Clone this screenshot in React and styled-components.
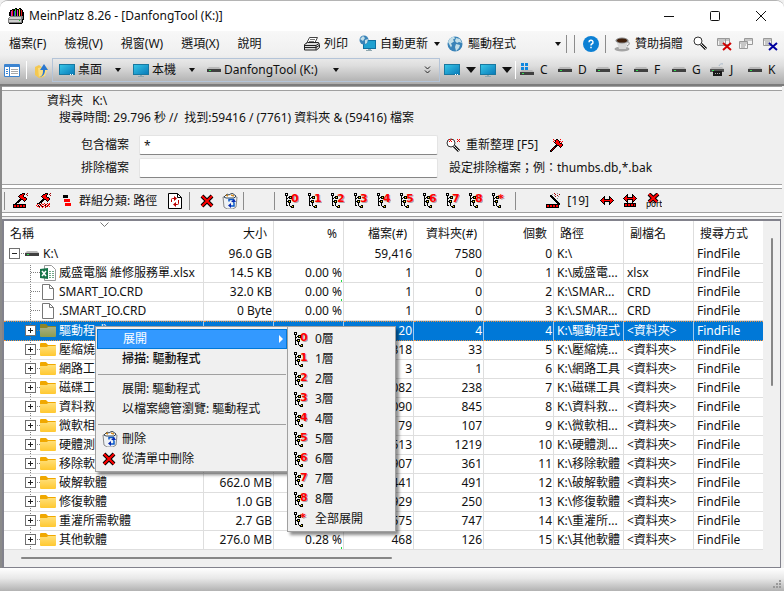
import React, { useState } from 'react';
import styled, { createGlobalStyle, css } from 'styled-components';

const GlobalStyle = createGlobalStyle`
  * {
    box-sizing: border-box;
  }
  body {
    margin: 0;
    background: #f0f0f0;
    color: #111;
    font: 12px/16px 'Noto Sans', 'Noto Sans CJK TC', sans-serif;
  }
  button, input {
    margin: 0;
    padding: 0;
    border: none;
    background: none;
    color: inherit;
    font: inherit;
  }
  svg {
    display: block;
    flex: none;
  }
`;

const Window = styled.div`
  display: flex;
  flex-direction: column;
  min-height: 100vh;
  border-top: 1px solid #b4b4b4;
  border-radius: 8px 8px 0 0;
  background: #fff;
  overflow: hidden;
  white-space: nowrap;
`;

const TitleBar = styled.header`
  display: flex;
  align-items: center;
  gap: 5px;
  height: 30px;
  padding-left: 8px;
  background: #fff;

  h1 {
    flex: 1;
    margin: 0;
    font-size: 12px;
    font-weight: 400;
  }
`;

const WindowButtons = styled.div`
  display: flex;

  button {
    display: flex;
    align-items: center;
    justify-content: center;
    width: 46px;
    height: 28px;
  }
`;

const Bars = styled.div`
  background: linear-gradient(#f8f8f8, #efefef 45%, #dedede 65%, #acacac);
  border-bottom: 2px solid #7c7c7c;
`;

const Bar = styled.div`
  display: flex;
  align-items: center;
  height: ${props => props.height}px;
  padding: ${props => props.padding || '0'};
`;

const MenuBar = styled.nav`
  display: flex;
  width: 304px;

  button {
    padding: 0 9px;
  }
`;

const ToolButton = styled.button`
  display: flex;
  align-items: center;
  gap: ${props => props.gap || 4}px;
  flex: ${props => (props.grow ? '1' : 'none')};
  margin-right: ${props => props.after || 0}px;
  text-align: left;

  span {
    flex: ${props => (props.grow ? '1' : 'none')};
  }
`;

const Divider = styled.i`
  width: 1px;
  height: ${props => props.height || 18}px;
  margin-right: ${props => props.after || 0}px;
  background: ${props => props.color || '#8c8c8c'};
`;

const Address = styled.div`
  display: flex;
  align-items: center;
  flex: 1;
  height: 24px;
  margin-right: 4px;
  padding: 0 8px 0 6px;
  border: 1px solid #b4c4d8;
`;

const Spacer = styled.span`
  flex: 1;
`;

const Arrow = styled.i`
  width: 0;
  height: 0;
  margin-left: ${props => props.before || 0}px;
  border: ${props => props.size || 3}px solid transparent;
  border-top: ${props => (props.size || 3) + 1}px solid #111;
  border-bottom: 0;
`;

const Drives = styled.div`
  display: flex;

  button {
    width: 38px;
    gap: 6px;
  }
  button:last-child {
    width: 36px;
  }
`;

const Client = styled.main`
  flex: 1;
  display: flex;
  flex-direction: column;
  padding: 0 2px 0 0;
  border-left: 2px solid #8a8a8a;
  background: #f0f0f0;
`;

const Splitter = styled.div`
  flex: none;
  height: 5px;
  border: 1px solid #a0a0a0;
  border-width: 1px 0;
  background: #fff;
`;

const Info = styled.section`
  height: 93px;
  padding-top: 2px;

  p {
    margin: 0 0 1px;
    padding-left: 45px;
  }
  p + p {
    padding-left: 57px;
  }
  p span {
    margin-left: 6px;
  }
`;

const Filters = styled.form`
  display: grid;
  grid-template-columns: 129px minmax(0, 1fr) 336px;
  column-gap: 8px;
  row-gap: 3px;
  align-items: center;
  margin-top: 9px;

  label {
    padding-right: 2px;
    text-align: right;
  }
  input {
    height: 20px;
    padding: 0 4px;
    border: 1px solid #e4e4e4;
    border-bottom-color: #868686;
    border-radius: 2px;
    background: #fff;
  }
`;

const FilterActions = styled.div`
  display: flex;
  align-items: center;
  padding-left: ${props => props.indent || 0}px;
`;

const Pane = styled.section`
  position: relative;
  flex: 1;
  display: grid;
  grid-template-columns: minmax(0, 1fr) 17px;
  grid-template-rows: auto 1fr;
  margin-top: 2px;
  margin-right: 1px;
  border: 1px solid #82828c;
  border-width: 2px 1px 1px 2px;
  background: #f0f0f0;
`;

const Grid = styled.table`
  width: 100%;
  table-layout: fixed;
  border-collapse: separate;
  border-spacing: 0;
  background: #fff;

  th {
    position: relative;
    height: 24px;
    padding: 1px 6px 0;
    border-right: 1px solid #dedede;
    font-weight: 400;
    text-align: left;
  }
  th:last-child, td:last-child {
    border-right: 0;
  }
`;

const Row = styled.tr`
  td {
    position: relative;
    height: 19px;
    padding: 0 3px 1px;
    border: 1px solid #dedede;
    border-width: 0 1px 1px 0;
    line-height: 17px;
    overflow: hidden;
  }
  ${props => props.selected && css`
    td {
      border-top: 1px dotted #e89040;
      border-bottom: 1px dotted #e89040;
      border-right-color: #9fcaf0;
      background: #0078d7;
      color: #fff;
      line-height: 15px;
    }
  `}
`;

const Th = styled.th`
  && {
    text-align: ${props => (props.right ? 'right' : 'left')};
  }
`;

const Td = styled.td`
  && {
    padding-right: 1px;
    text-align: ${props => (props.right ? 'right' : 'left')};
  }
`;

const NameCell = styled.div`
  display: flex;
  align-items: center;
  height: 17px;
  margin-left: ${props => (props.root ? 2 : 18)}px;
`;

const SortMark = styled.span`
  position: absolute;
  left: 96px;
  top: 1px;
`;

const PercentBar = styled.i`
  position: absolute;
  right: 1px;
  bottom: 0;
  width: 1px;
  height: 2px;
  background: #22dd44;
`;

const VerticalScroll = styled.div`
  padding: 17px 7px 0 8px;

  i {
    display: block;
    height: 148px;
    border-radius: 1px;
    background: #868686;
  }
`;

const HorizontalScroll = styled.div`
  grid-column: 1 / 3;
  height: 17px;
  padding: 7px 17px;

  i {
    display: block;
    width: 50%;
    height: 2px;
    border-radius: 1px;
    background: #868686;
  }
`;

const Menu = styled.div`
  position: absolute;
  left: ${props => props.left}px;
  top: 105px;
  width: ${props => props.width}px;
  padding: 2px 1px;
  border: 1px solid #a0a0a0;
  background: #f0f0f0;
  box-shadow: 3px 3px 3px rgba(0, 0, 0, 0.45);

  hr {
    height: 1px;
    margin: 5px 1px 4px;
    border: 0;
    background: #a0a0a0;
  }
`;

const MenuItem = styled.button`
  display: grid;
  grid-template-columns: ${props => props.iconWidth || 25}px 1fr auto;
  align-items: center;
  width: 100%;
  height: 20px;
  text-align: left;
  font-weight: ${props => (props.bold ? 500 : 400)};
  ${props => props.active && css`
    border: 1px solid #0078d7;
    background: #3399ff;
    color: #fff;
  `}

  svg {
    grid-column: 1;
    margin-left: 5px;
  }
  span {
    grid-column: 2;
  }
`;

const SubArrow = styled.i`
  margin-right: 3px;
  border: 4px solid transparent;
  border-left-color: #fff;
  border-right: 0;
`;

const StatusBar = styled.footer`
  display: flex;
  align-items: flex-end;
  justify-content: flex-end;
  height: 23px;
  padding: 0 3px 3px;
  background: linear-gradient(#fff, #e8e8e8 45%, #b2b2b2);
`;

/* icons */

const palette = { k: '#000', r: '#f00', d: '#a00000', g: '#909090', w: '#fff', y: '#f0e020', l: '#d0d0d0', b: '#0000b0' };
const appPalette = { k: '#000', r: '#e02020', m: '#e020c0', b: '#3030e0', y: '#e8d820', n: '#30c030', l: '#cfcfcf', g: '#808080' };

const Pixels = ({ rows, colors = palette, children }) => {
  const width = Math.max(...rows.map(row => row.length));
  return (
    <svg width={width} height={rows.length} shapeRendering="crispEdges" aria-hidden="true">
      {rows.map((row, y) => row.split('').map((c, x) => (
        colors[c] ? <rect key={`${x}-${y}`} x={x} y={y} width="1" height="1" fill={colors[c]} /> : null
      )))}
      {children}
    </svg>
  );
};

const appRows = [
  '.......kk..kk...',
  '....kkknkkkykk..',
  '..kkrkknkmkykrk.',
  '..kmrkbnkmkykrk.',
  '.kkmrkbnkmkykrkk',
  '.kkmrkbnkmkykrkk',
  '.kkmrkbnkmkykrkk',
  '.kkmrkbnkmkykrkk',
  '..gggggggggggggk',
  '.glllllllllllggk',
  'gllllllllllllggk',
  'ggggggggggggggkk',
  'gllllllllllnlgk.',
  'gllllllllllllgk.',
  'ggggggggggggggk.',
  '.kkkkkkkkkkkkk..',
];

const treeRows = [
  'kkk...........',
  'kwk...........',
  'kkk...........',
  '.k..kkk.......',
  '.k.kkyk.......',
  '.kk.kkk.......',
  '.k............',
  '.k.kkk........',
  '.kkkyk........',
  '.k.kkk........',
  '.k..k.........',
  '.k..k.........',
  '.kk.k..kk.....',
  '.....kkyk.....',
  '......kkk.....',
];

const hammerRows = [
  '.........kkk..d.',
  '.......kkrrk.d..',
  '......krrrk...d.',
  '.....krrrrk.....',
  '......krrrrkk...',
  '.......krrrrrk..',
  '......kkkkrrrk..',
  '.....kkk..krk...',
  '....kkk....k....',
  '...kkk..........',
];

const hammerBaseRows = [...hammerRows, '..kk............', 'kkkkkkkkkkkkk...', 'krrkrrkrrkrrk...', 'krrkrrkrrkrrk...', 'kkkkkkkkkkkkk...'];
const hammerDotRows = [...hammerRows, '.kkk.d..r..d.r..', '.r.rk.rr.dr.rr..', 'r.k.rd..rk.dr...', '.rrk.rkr.rrd.r..', '...r..r..d......'];

const hitRows = [
  '...r..kk..r...',
  '....rkrrk.....',
  '...r.krrrkr.r.',
  '....krrrrk.r..',
  '.....krrrrkk..',
  '......krrrrrk.',
  '.....kkkkrrrk.',
  '....kkk..krk..',
  '...kdk....k...',
  '..kdk.........',
  '.kdk..........',
  'kdk...........',
  'kk............',
];

const wandRows = [
  '........d..g....',
  '......g..d...d..',
  '....kk..g..d....',
  '....kkk..d..g...',
  '.....kkk........',
  '......kkk..g....',
  '.......kkk......',
  '........kkk.....',
  '.........kkk....',
  '..........kkk...',
  '...........kkk..',
  'kkkkkkkkkkkkkk..',
  'krrkrrkrrkrrk...',
  'krrkrrkrrkrrk...',
  'kkkkkkkkkkkkk...',
];

const swapRows = [
  '....k....k....',
  '...kk....kk...',
  '..krk....krk..',
  '.krrkkkkkkrrk.',
  'krrrrrrrrrrrrk',
  '.krrkkkkkkrrk.',
  '..krk....krk..',
  '...kk....kk...',
  '....k....k....',
];

const swapBaseRows = [...swapRows, '.kkkkkkkkkkkk.', '.krrkrrkrrkrk.', '.krrkrrkrrkrk.', '.kkkkkkkkkkkk.'];

const Depth = ({ level }) => (
  <Pixels rows={treeRows}>
    <text x="7" y="10" fontSize="11" fontFamily="DejaVu Sans" fontWeight="700" fill="#b0a0a0">{level}</text>
    <text x="6" y="9" fontSize="11" fontFamily="DejaVu Sans" fontWeight="700" fill="#f00">{level}</text>
  </Pixels>
);

const Screen = ({ stand }) => (
  <svg width="16" height="14" aria-hidden="true">
    <linearGradient id="screen" x2="1" y2="1">
      <stop stopColor="#38c8e8" />
      <stop offset="1" stopColor="#0878b8" />
    </linearGradient>
    <rect x="0.5" y="1.5" width="15" height="10" fill="url(#screen)" stroke="#1878a0" />
    {stand
      ? <path d="M7 12h2v1h2v1H5v-1h2z" fill="#90a8b0" />
      : <path d="M11 11.5h1m1 0h1" stroke="#fff" />}
  </svg>
);

const Drive = ({ windows }) => (
  <svg width="14" height={windows ? 16 : 6} aria-hidden="true">
    {windows && <path d="M1 1h3v3H1zM5 1h3v3H5zM1 5h3v3H1zM5 5h3v3H5z" fill="#1088e0" />}
    <g transform={windows ? 'translate(0 8)' : undefined}>
      <path d="M2 0h10l2 2H0z" fill="#b8b8b8" />
      <path d="M0 2h14v3H0z" fill="#404040" />
      <path d="M2 3h2v1H2z" fill="#30e050" />
    </g>
  </svg>
);

const UsbDrive = () => (
  <svg width="14" height="14" aria-hidden="true">
    <path d="M9 3a3 3 0 0 1 4-2" stroke="#a8b8c8" fill="none" />
    <path d="M2 4h10l2 2H0z" fill="#b8b8b8" />
    <path d="M0 6h14v3H0z" fill="#505050" />
    <path d="M3 8h9v5H3z" fill="#181818" />
    <path d="M5 10.500h5" stroke="#aaa" strokeDasharray="1 1" />
    <path d="M2 7h2v1H2z" fill="#30e050" />
  </svg>
);

const Globe = ({ size = 16 }) => (
  <svg width={size} height={size} viewBox="0 0 16 16" aria-hidden="true">
    <circle cx="8" cy="8" r="7.5" fill="#3a83b8" />
    <path d="M1 6c1-3 3-5 6-5.500l1 2-2 1 1 2-3 2 1 2-1 2zM9 2l4 1 2 4-3-1-2 1-2-2zM9 8l4 1-1 3-3 3-1-4z" fill="#c4dfe8" />
  </svg>
);

const UpdateIcon = () => (
  <svg width="17" height="17" aria-hidden="true">
    <rect x="4.500" y="5.500" width="12" height="8" fill="#20a0d0" stroke="#1070a0" />
    <path d="M9 14h3v1h1v1H7v-1h2z" fill="#90a8b0" />
    <circle cx="5" cy="5" r="4.500" fill="#3a83b8" />
    <path d="M1 4l3-3 2 2-2 3zM6 5l3-1-1 4-2 1z" fill="#c4dfe8" />
  </svg>
);

const PrinterIcon = () => (
  <svg width="16" height="15" aria-hidden="true">
    <path d="M5.500 1.500h8l-3 6h-8z" fill="#fff" stroke="#444" />
    <path d="M6 3.500h5M5 5.500h5" stroke="#777" />
    <path d="M.5 8.500l3-2h11l1 2v3l-3 2.500H.5z" fill="#ddd" stroke="#222" />
    <path d="M1 9.500h11l3-2M1 11.500h11l3-2M12 10v4" stroke="#222" fill="none" />
  </svg>
);

const HelpIcon = () => (
  <svg width="16" height="16" aria-hidden="true">
    <circle cx="8" cy="8" r="8" fill="#0c80d4" />
    <path d="M6 6.200a2 2 0 1 1 2.800 1.800c-.6.300-.8.600-.8 1.500M8 10.800v1.500" fill="none" stroke="#fff" strokeWidth="1.500" />
  </svg>
);

const CoffeeIcon = () => (
  <svg width="17" height="16" aria-hidden="true">
    <ellipse cx="8" cy="13" rx="7.500" ry="2.500" fill="#a4a4a4" />
    <path d="M2 4h12l-2 9H5z" fill="#d8d8d8" />
    <path d="M13 6c3-1 3 3 0 4" fill="none" stroke="#888" />
    <ellipse cx="8" cy="4.500" rx="6.500" ry="3" fill="#888" />
    <ellipse cx="8" cy="4.500" rx="5" ry="2" fill="#40200c" />
  </svg>
);

const Magnifier = ({ sparks }) => (
  <svg width="16" height="15" aria-hidden="true">
    <path d="M8 8l5 5" stroke="#111" strokeWidth="3" />
    <path d="M8 8l5 5" stroke="#ddd" />
    <circle cx="5" cy="5" r="4" fill="#fff" stroke="#333" />
    {sparks && <path d="M3 1l3 3M6 1L3 4M11 1l3 3m0-3l-3 3" stroke="#e00" />}
  </svg>
);

const CloseIcon = () => (
  <svg width="14" height="14" aria-hidden="true">
    <path d="M2 2l10 10M12 2L2 12" stroke="#000" strokeWidth="4" />
    <path d="M2 2l10 10M12 2L2 12" stroke="#f00" strokeWidth="2" />
  </svg>
);

const WindowsIcon = ({ cross, single }) => (
  <svg width="16" height="14" aria-hidden="true">
    {!single && <path d="M5.500 1.500h8v6h-8zM6 3h7" fill="#f4f4f4" stroke="#999" />}
    <g transform={cross ? undefined : 'translate(-1 3)'}>
      <path d="M1.500 1.500h8v7h-8zM2 3h7M3 5h5M3 7h4" fill="#f4f4f4" stroke="#999" />
    </g>
    {cross && <path d="M7 6l8 7M15 6l-8 7" stroke={cross} strokeWidth="2" />}
  </svg>
);

const PanelIcon = () => (
  <svg width="16" height="13" aria-hidden="true">
    <path d="M.5.500h15v12H.5z" fill="#fff" stroke="#3c84d0" />
    <path d="M1 2h14" stroke="#3c84d0" strokeWidth="2" />
    <path d="M5.500 3v10M2 5.500h2M2 7.500h2M2 9.500h2" stroke="#3c84d0" />
    <path d="M7 5.500h7M7 7.500h7M7 9.500h7" stroke="#a8a8a8" />
  </svg>
);

const FolderUpIcon = () => (
  <svg width="15" height="15" aria-hidden="true">
    <path d="M1 4l4-2 5 4v8l-5 1-4-3z" fill="#f4c850" />
    <path d="M4 5l6-1 4 1-3 8-6 1z" fill="#fbdd80" />
    <path d="M5 14c4-1 4-4 4-7H6l4-6 4 6h-3c0 4-2 7-6 7z" fill="#2a78d0" />
  </svg>
);

const FolderIcon = ({ dim }) => (
  <svg width="16" height="13" aria-hidden="true">
    <linearGradient id={dim ? 'folder-dim' : 'folder'} x2="0" y2="1">
      <stop stopColor={dim ? '#a8b084' : '#ffdf78'} />
      <stop offset="1" stopColor={dim ? '#8c9c50' : '#ffc830'} />
    </linearGradient>
    <path d="M0 1q0-1 1-1h5l2 2h7q1 0 1 1v3H0z" fill={dim ? '#8c8428' : '#f0a800'} />
    <path d="M0 4h7l1-1h8v9q0 1-1 1H1q-1 0-1-1z" fill={dim ? 'url(#folder-dim)' : 'url(#folder)'} />
  </svg>
);

const FileIcon = () => (
  <svg width="16" height="16" aria-hidden="true">
    <path d="M2.500.500h7l4 4v11h-11z" fill="#fff" stroke="#777" />
    <path d="M9.500.500v4h4" fill="none" stroke="#777" />
  </svg>
);

const ExcelIcon = () => (
  <svg width="16" height="16" aria-hidden="true">
    <path d="M4.500.500h7l4 4v11h-11z" fill="#fff" stroke="#999" />
    <path d="M9 6.500h5M9 8.500h5M9 10.500h5M9 12.500h5" stroke="#70a888" strokeDasharray="2 1" />
    <path d="M0 4l8-1v11l-8-1z" fill="#18744a" />
    <path d="M2 6l4 5M6 6l-4 5" stroke="#fff" strokeWidth="1.500" />
  </svg>
);

const RefreshPage = () => (
  <svg width="14" height="16" aria-hidden="true">
    <path d="M.5.500h9l4 4v11H.5z" fill="#fff" stroke="#000" />
    <path d="M9.500.500v4h4" fill="none" stroke="#000" />
    <path d="M3.500 9V6.500q0-1 1-1H7M10.500 7v3.500q0 1-1 1H7" fill="none" stroke="#b00" />
    <path d="M6 3l3 2.500L6 8zM8 9l-3 2.500L8 14z" fill="#b00" />
  </svg>
);

const RecycleIcon = () => (
  <svg width="16" height="16" aria-hidden="true">
    <path d="M1 4h14l-1 10-3 2H5l-3-2z" fill="#eef2f6" stroke="#888" />
    <path d="M2 4l3-3 2 1 3-2 4 3-2 2H4z" fill="#fff" stroke="#345" />
    <path d="M4 2l2 1M9 2l3 1" stroke="#c82" strokeWidth="1.500" />
    <path d="M7 8.500V6.500h4.500v3M12 9.500v3.500H8" fill="none" stroke="#0858c8" strokeWidth="1.500" />
    <path d="M9 10v5l-3-2.500zM9 9h5l-2-3z" fill="#0828b0" />
  </svg>
);

const GroupIcon = () => (
  <svg width="9" height="12" shapeRendering="crispEdges" aria-hidden="true">
    <path d="M0 0h5v3H0z" fill="#000" />
    <path d="M1 4h6v3H1zM2 8h6v3H2z" fill="#f00" />
  </svg>
);

const PortIcon = () => (
  <svg width="16" height="16" aria-hidden="true">
    <path d="M3 1l8 8M12 1l-9 8" stroke="#000" strokeWidth="4" />
    <path d="M3 1l8 8M12 1l-9 8" stroke="#f00" strokeWidth="2" />
    <text x="0" y="14" fontSize="8" fontFamily="DejaVu Sans" fill="#000">port</text>
  </svg>
);

// dotted branch with an optional expander box, as drawn left of each node
const Branch = ({ expander, root }) => (
  <svg width={root ? 16 : 15} height="19" aria-hidden="true" shapeRendering="crispEdges">
    {!root && <path d="M5.500 0v19" stroke="#808080" strokeDasharray="1 1" />}
    <path d="M6 9.500h10" stroke="#808080" strokeDasharray="1 1" />
    {expander && (
      <g>
        <rect x="0.500" y="4.500" width="10" height="10" fill="#fff" stroke="#707070" />
        <path d={expander === '+' ? 'M3 9.500h5M5.500 7v5' : 'M3 9.500h5'} stroke="#222" />
      </g>
    )}
  </svg>
);

/* data */

const columns = [
  { title: '名稱', width: 200 },
  { title: '大小', width: 70, right: true },
  { title: '%', width: 70, right: true },
  { title: '檔案(#)', width: 70, right: true },
  { title: '資料夾(#)', width: 70, right: true },
  { title: '個數', width: 70, right: true },
  { title: '路徑', width: 70 },
  { title: '副檔名', width: 70 },
  { title: '搜尋方式' },
];

const DIR = '<資料夾>';

const items = [
  ['drive', 'K:\\', '96.0 GB', '', '59,416', '7580', 'K:\\', ''],
  ['excel', '威盛電腦 維修服務單.xlsx', '14.5 KB', '0.00 %', '1', '0', 'K:\\威盛電...', 'xlsx'],
  ['file', 'SMART_IO.CRD', '32.0 KB', '0.00 %', '1', '0', 'K:\\SMAR...', 'CRD'],
  ['file', '.SMART_IO.CRD', '0 Byte', '0.00 %', '1', '0', 'K:\\.SMAR...', 'CRD'],
  ['folder', '驅動程式', '16.4 GB', '16.00 %', '20', '4', 'K:\\驅動程式', DIR],
  ['folder', '壓縮燒', '', '', '318', '33', 'K:\\壓縮燒...', DIR],
  ['folder', '網路工', '', '', '3', '1', 'K:\\網路工具', DIR],
  ['folder', '磁碟工', '', '', '082', '238', 'K:\\磁碟工具', DIR],
  ['folder', '資料救', '', '', '090', '845', 'K:\\資料救...', DIR],
  ['folder', '微軟相', '', '', '79', '107', 'K:\\微軟相...', DIR],
  ['folder', '硬體測', '', '', '513', '1219', 'K:\\硬體測...', DIR],
  ['folder', '移除軟', '', '', '907', '361', 'K:\\移除軟體', DIR],
  ['folder', '破解軟體', '662.0 MB', '', '441', '491', 'K:\\破解軟體', DIR],
  ['folder', '修復軟體', '1.0 GB', '', '929', '250', 'K:\\修復軟體', DIR],
  ['folder', '重灌所需軟體', '2.7 GB', '', '575', '747', 'K:\\重灌所...', DIR],
  ['folder', '其他軟體', '276.0 MB', '0.28 %', '468', '126', 'K:\\其他軟體', DIR],
];

const levels = ['0', '1', '2', '3', '4', '5', '6', '7', '8', '*'];

const NodeIcon = ({ kind, selected }) => {
  if (kind === 'drive') return <Drive />;
  if (kind === 'excel') return <ExcelIcon />;
  if (kind === 'file') return <FileIcon />;
  return <FolderIcon dim={selected} />;
};

const NodeName = styled.span`
  margin-left: ${props => (props.root ? 4 : 3)}px;
`;

const ItemRow = ({ item, index, selected, onSelect }) => {
  const [kind, name, size, percent, files, folders, path, ext] = item;
  const root = kind === 'drive';
  const expander = root ? '-' : kind === 'folder' && '+';
  return (
    <Row selected={selected} onClick={onSelect}>
      <Td>
        <NameCell root={root}>
          <Branch expander={expander} root={root} />
          <NodeIcon kind={kind} selected={selected} />
          <NodeName root={root}>{name}</NodeName>
        </NameCell>
      </Td>
      <Td right>{size}</Td>
      <Td right>
        {percent}
        {percent && index !== 3 && !selected && <PercentBar />}
      </Td>
      <Td right>{files}</Td>
      <Td right>{folders}</Td>
      <Td right>{index}</Td>
      <Td>{path}</Td>
      <Td>{ext}</Td>
      <Td>FindFile</Td>
    </Row>
  );
};

const App = () => {
  const [selected, setSelected] = useState(4);
  const [include, setInclude] = useState('*');
  const [exclude, setExclude] = useState('');

  return (
    <Window>
      <GlobalStyle />
      <TitleBar>
        <Pixels rows={appRows} colors={appPalette} />
        <h1>MeinPlatz 8.26 - [DanfongTool (K:)]</h1>
        <WindowButtons>
          <button aria-label="Minimize"><svg width="10" height="10"><path d="M0 5.500h10" stroke="#111" /></svg></button>
          <button aria-label="Maximize"><svg width="10" height="10"><rect x="0.500" y="0.500" width="9" height="9" rx="1" fill="none" stroke="#111" /></svg></button>
          <button aria-label="Close"><svg width="10" height="10"><path d="M0 0l10 10M10 0L0 10" stroke="#111" /></svg></button>
        </WindowButtons>
      </TitleBar>

      <Bars>
        <Bar height={25}>
          <MenuBar>
            <button>檔案(F)</button>
            <button>檢視(V)</button>
            <button>視窗(W)</button>
            <button>選項(X)</button>
            <button>說明</button>
          </MenuBar>
          <ToolButton after={11}><PrinterIcon /><span>列印</span></ToolButton>
          <ToolButton after={7}><UpdateIcon /><span>自動更新</span><Arrow before={2} /></ToolButton>
          <ToolButton grow gap={5} after={5}><Globe /><span>驅動程式</span><Arrow /></ToolButton>
          <Divider after={7} />
          <Divider after={8} />
          <ToolButton aria-label="Help" after={6}><HelpIcon /></ToolButton>
          <Divider after={8} />
          <ToolButton after={10}><CoffeeIcon /><span>贊助捐贈</span></ToolButton>
          <ToolButton aria-label="Find" after={7}><Magnifier /></ToolButton>
          <ToolButton aria-label="Close all" after={7}><WindowsIcon cross="#d00000" /></ToolButton>
          <ToolButton aria-label="Cascade" after={7}><WindowsIcon /></ToolButton>
          <ToolButton aria-label="Close window" after={6}><WindowsIcon single cross="#0000a0" /></ToolButton>
        </Bar>
        <Bar height={28} padding="0 0 0 4px">
          <ToolButton aria-label="Panel" after={6}><PanelIcon /></ToolButton>
          <Divider color="#fff" after={7} />
          <ToolButton aria-label="Up" after={3}><FolderUpIcon /></ToolButton>
          <Address>
            <ToolButton gap={3} after={12}><Screen /><span>桌面</span><Arrow before={10} /></ToolButton>
            <ToolButton gap={3} after={12}><Screen stand /><span>本機</span><Arrow before={10} /></ToolButton>
            <ToolButton gap={3}><Drive /><span>DanfongTool (K:)</span><Arrow before={12} /></ToolButton>
            <Spacer />
            <ToolButton aria-label="More">
              <svg width="7" height="8"><path d="M1 .500l2.500 2.500L6 .500M1 4.500L3.500 7 6 4.500" fill="none" stroke="#222" /></svg>
            </ToolButton>
          </Address>
          <ToolButton aria-label="Desktop" gap={6} after={4}><Screen /><Arrow size={5} /></ToolButton>
          <ToolButton aria-label="Computer" gap={6} after={3}><Screen stand /><Arrow size={5} /></ToolButton>
          <Divider color="#fff" after={4} />
          <Drives>
            {['C', 'D', 'E', 'F', 'G', 'J', 'K'].map(letter => (
              <ToolButton key={letter}>
                {letter === 'J' ? <UsbDrive /> : <Drive windows={letter === 'C'} />}
                <span>{letter}</span>
              </ToolButton>
            ))}
          </Drives>
        </Bar>
      </Bars>

      <Client>
        <Splitter />
        <Info>
          <p>資料夾 <span>K:\</span></p>
          <p>搜尋時間: 29.796 秒 //&nbsp; 找到:59416 / (7761) 資料夾 &amp; (59416) 檔案</p>
          <Filters onSubmit={e => e.preventDefault()}>
            <label htmlFor="include">包含檔案</label>
            <input id="include" value={include} onChange={e => setInclude(e.target.value)} />
            <FilterActions>
              <ToolButton type="submit" gap={4} after={12}><Magnifier sparks /><span>重新整理 [F5]</span></ToolButton>
              <ToolButton type="button" aria-label="Stop"><Pixels rows={hitRows} /></ToolButton>
            </FilterActions>
            <label htmlFor="exclude">排除檔案</label>
            <input id="exclude" value={exclude} onChange={e => setExclude(e.target.value)} />
            <FilterActions indent={3}>設定排除檔案；例：thumbs.db,*.bak</FilterActions>
          </Filters>
        </Info>
        <Splitter />
        <Bar height={23} padding="0 0 0 2px">
          <Divider after={8} />
          <ToolButton aria-label="Scan" after={7}><Pixels rows={hammerBaseRows} /></ToolButton>
          <ToolButton aria-label="Scan all" after={11}><Pixels rows={hammerDotRows} /></ToolButton>
          <ToolButton gap={7} after={11}><GroupIcon /><span>群組分類: 路徑</span></ToolButton>
          <ToolButton aria-label="Refresh" after={7}><RefreshPage /></ToolButton>
          <Divider after={10} />
          <ToolButton aria-label="Remove" after={8}><CloseIcon /></ToolButton>
          <ToolButton aria-label="Delete" after={5}><RecycleIcon /></ToolButton>
          <Divider after={30} />
          <Divider after={10} />
          {levels.map(level => (
            <ToolButton key={level} aria-label={`Level ${level}`} after={9}><Depth level={level} /></ToolButton>
          ))}
          <Divider after={30} />
          <ToolButton gap={5} after={11}><Pixels rows={wandRows} /><span>[19]</span></ToolButton>
          <ToolButton aria-label="Width" after={9}><Pixels rows={swapRows} /></ToolButton>
          <ToolButton aria-label="Fit" after={9}><Pixels rows={swapBaseRows} /></ToolButton>
          <ToolButton aria-label="Port"><PortIcon /></ToolButton>
        </Bar>
        <Splitter />
        <Pane>
          <Grid>
            <colgroup>
              {columns.map(column => <col key={column.title} width={column.width} />)}
            </colgroup>
            <thead>
              <tr>
                {columns.map((column, i) => (
                  <Th key={column.title} right={column.right}>
                    {column.title}
                    {i === 0 && (
                      <SortMark>
                        <svg width="9" height="5"><path d="M.5.500l4 4 4-4" fill="none" stroke="#777" /></svg>
                      </SortMark>
                    )}
                  </Th>
                ))}
              </tr>
            </thead>
            <tbody>
              {items.map((item, i) => (
                <ItemRow key={item[1]} item={item} index={i} selected={i === selected} onSelect={() => setSelected(i)} />
              ))}
            </tbody>
          </Grid>
          <VerticalScroll><i /></VerticalScroll>
          <HorizontalScroll><i /></HorizontalScroll>

          <Menu left={91} width={194}>
            <MenuItem active><span>展開</span><SubArrow /></MenuItem>
            <MenuItem bold><span>掃描: 驅動程式</span></MenuItem>
            <hr />
            <MenuItem><span>展開: 驅動程式</span></MenuItem>
            <MenuItem><span>以檔案總管瀏覽: 驅動程式</span></MenuItem>
            <hr />
            <MenuItem><RecycleIcon /><span>刪除</span></MenuItem>
            <MenuItem><CloseIcon /><span>從清單中刪除</span></MenuItem>
          </Menu>
          <Menu left={283} width={109}>
            {levels.map(level => (
              <MenuItem key={level} iconWidth={26}>
                <Depth level={level} />
                <span>{level === '*' ? '全部展開' : `${level}層`}</span>
              </MenuItem>
            ))}
          </Menu>
        </Pane>
      </Client>
      <StatusBar>
        <svg width="8" height="8"><path d="M6 0h2v2H6zM3 3h2v2H3zM6 3h2v2H6zM0 6h2v2H0zM3 6h2v2H3zM6 6h2v2H6z" fill="#999" /></svg>
      </StatusBar>
    </Window>
  );
};

export default App;
